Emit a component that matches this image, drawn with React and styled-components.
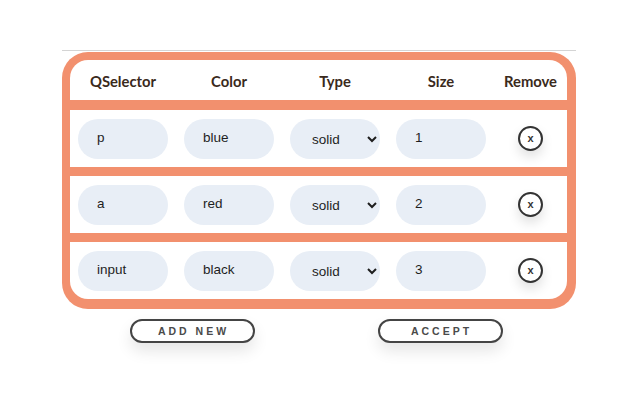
import React, { useState } from 'react'
import styled, { createGlobalStyle } from 'styled-components'

const GlobalStyle = createGlobalStyle`
  html, body {
    margin: 0;
    padding: 0;
    background: #fff;
  }
  body {
    font-family: 'Liberation Sans', Arial, sans-serif;
  }
`

const initialRows = [
  { selector: 'p', color: 'blue', type: 'solid', size: '1' },
  { selector: 'a', color: 'red', type: 'solid', size: '2' },
  { selector: 'input', color: 'black', type: 'solid', size: '3' },
]

export default function App() {
  const [rows, setRows] = useState(initialRows)

  const removeRow = (index) => {
    setRows(rows.filter((_, i) => i !== index))
  }

  return (
    <Page>
      <GlobalStyle />
      <Wrapper>
        <Card>
          <HeaderRow>
            <HeadCell>QSelector</HeadCell>
            <HeadCell>Color</HeadCell>
            <HeadCell>Type</HeadCell>
            <HeadCell>Size</HeadCell>
            <HeadCell>Remove</HeadCell>
          </HeaderRow>
          {rows.map((row, i) => (
            <Row key={row.selector} $last={i === rows.length - 1}>
              <Cell>
                <Field defaultValue={row.selector} />
              </Cell>
              <Cell>
                <Field defaultValue={row.color} />
              </Cell>
              <Cell>
                <Select defaultValue={row.type}>
                  <option value='solid'>solid</option>
                  <option value='dashed'>dashed</option>
                  <option value='dotted'>dotted</option>
                </Select>
              </Cell>
              <Cell>
                <Field defaultValue={row.size} />
              </Cell>
              <Cell>
                <RemoveButton onClick={() => removeRow(i)}>x</RemoveButton>
              </Cell>
            </Row>
          ))}
        </Card>
        <Actions>
          <ActionButton>ADD NEW</ActionButton>
          <ActionButton>ACCEPT</ActionButton>
        </Actions>
      </Wrapper>
    </Page>
  )
}

const Page = styled.div`
  width: 640px;
  height: 400px;
  display: flex;
  justify-content: center;
  padding-top: 50px;
  box-sizing: border-box;
`

const Wrapper = styled.div`
  width: 514px;
  margin-left: -2px;
  border-top: 1px solid #d4d4d4;
`

const Card = styled.div`
  margin-top: 1px;
  background: #f2906e;
  border-radius: 26px;
  padding: 8px 9px 10px 8px;
  display: flex;
  flex-direction: column;
  gap: 9px;
`

const HeaderRow = styled.div`
  display: grid;
  grid-template-columns: 106px 106px 106px 106px 1fr;
  align-items: center;
  height: 40px;
  margin-bottom: 1px;
  background: #fff;
  border-radius: 18px 18px 0 0;
`

const HeadCell = styled.div`
  text-align: center;
  font-family: Lato, 'Open Sans', sans-serif;
  font-weight: 700;
  font-size: 14.8px;
  color: #3a2a1c;
  padding-top: 2px;
`

const Row = styled.div`
  display: grid;
  grid-template-columns: 106px 106px 106px 106px 1fr;
  align-items: center;
  height: 57px;
  background: #fff;
  border-radius: ${(p) => (p.$last ? '0 0 18px 18px' : '0')};
`

const Cell = styled.div`
  display: flex;
  justify-content: center;
  align-items: center;
`

const Field = styled.input`
  width: 90px;
  height: 40px;
  box-sizing: border-box;
  border: none;
  outline: none;
  border-radius: 20px;
  background: #e8eef6;
  padding: 0 0 2px 19px;
  font-family: 'Liberation Sans', Arial, sans-serif;
  font-size: 13.5px;
  color: #1e1e1e;
`

const Select = styled.select`
  width: 90px;
  height: 40px;
  box-sizing: border-box;
  border: none;
  outline: none;
  border-radius: 20px;
  background: #e8eef6;
  padding: 2px 4px 0 18px;
  font-family: 'Liberation Sans', Arial, sans-serif;
  font-size: 13.5px;
  color: #1e1e1e;
`

const RemoveButton = styled.button`
  width: 25px;
  height: 25px;
  box-sizing: border-box;
  border-radius: 50%;
  border: 2px solid #333;
  background: #fff;
  color: #333;
  font-family: 'Liberation Sans', Arial, sans-serif;
  font-weight: 700;
  font-size: 11px;
  padding: 0 0 2px;
  display: flex;
  align-items: center;
  justify-content: center;
  box-shadow: 0 6px 12px rgba(0, 0, 0, 0.12);
  cursor: pointer;
`

const Actions = styled.div`
  display: flex;
  justify-content: center;
  gap: 123px;
  margin-top: 10px;
  padding-right: 6px;
`

const ActionButton = styled.button`
  width: 125px;
  height: 24px;
  box-sizing: border-box;
  border: 2px solid #444;
  border-radius: 12px;
  background: #fff;
  color: #4a4a4a;
  font-family: 'Liberation Sans', Arial, sans-serif;
  font-weight: 700;
  font-size: 10.5px;
  letter-spacing: 3px;
  padding: 0 0 0 3px;
  box-shadow: 0 8px 15px rgba(0, 0, 0, 0.1);
  cursor: pointer;
`
